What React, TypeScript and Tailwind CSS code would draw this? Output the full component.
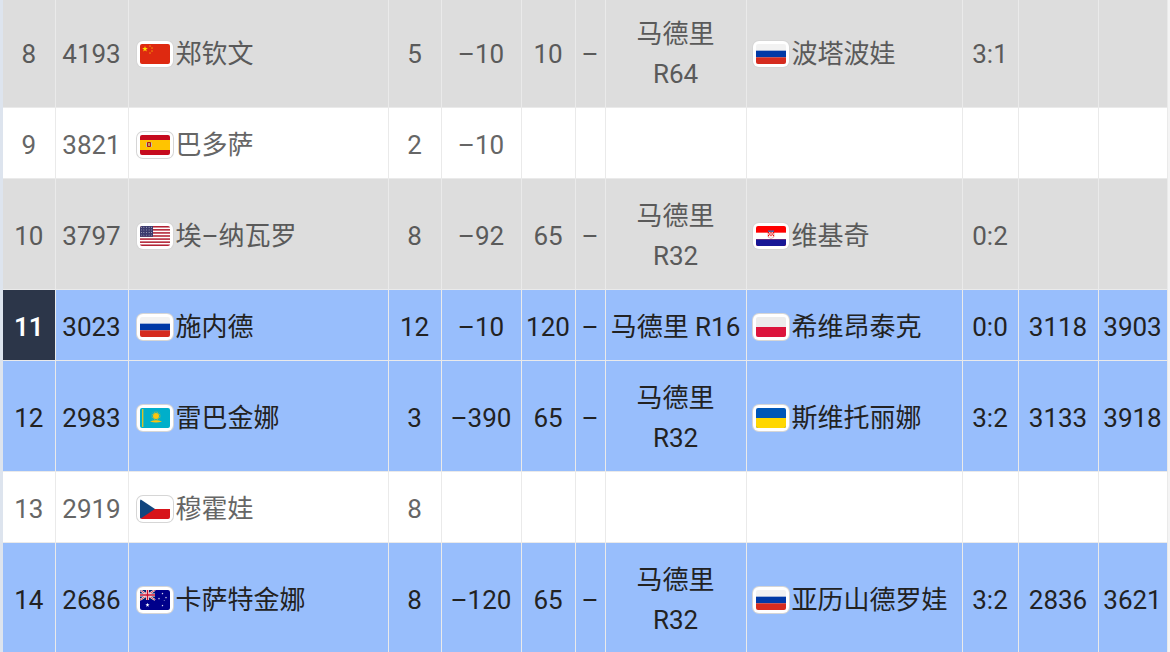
import React from "react";

type FlagCode = "cn" | "es" | "us" | "ru" | "hr" | "kz" | "pl" | "ua" | "cz" | "au";

function starPoints(cx: number, cy: number, r: number, rot = -90) {
  const pts: string[] = [];
  for (let i = 0; i < 10; i++) {
    const rad = i % 2 === 0 ? r : r * 0.4;
    const a = ((rot + i * 36) * Math.PI) / 180;
    pts.push(`${(cx + rad * Math.cos(a)).toFixed(2)},${(cy + rad * Math.sin(a)).toFixed(2)}`);
  }
  return pts.join(" ");
}

function UnionJack() {
  return (
    <g>
      <rect width="15" height="10" fill="#012169" />
      <path d="M0,0 L15,10 M15,0 L0,10" stroke="#fff" strokeWidth="2" />
      <path d="M0,0 L15,10 M15,0 L0,10" stroke="#c8102e" strokeWidth="0.8" />
      <path d="M7.5,0 V10 M0,5 H15" stroke="#fff" strokeWidth="3" />
      <path d="M7.5,0 V10 M0,5 H15" stroke="#c8102e" strokeWidth="1.6" />
    </g>
  );
}

function FlagArt({ code }: { code: FlagCode }) {
  switch (code) {
    case "cn":
      return (
        <>
          <rect width="30" height="20" fill="#de2910" />
          <polygon points={starPoints(5, 5, 3)} fill="#ffde00" />
          <polygon points={starPoints(10, 2, 1)} fill="#ffde00" />
          <polygon points={starPoints(12, 4, 1)} fill="#ffde00" />
          <polygon points={starPoints(12, 7, 1)} fill="#ffde00" />
          <polygon points={starPoints(10, 9, 1)} fill="#ffde00" />
        </>
      );
    case "es":
      return (
        <>
          <rect width="30" height="20" fill="#c60b1e" />
          <rect y="5" width="30" height="10" fill="#ffc400" />
          <rect x="7" y="7" width="4" height="5" rx="1" fill="#ad1519" />
          <rect x="8" y="8" width="2" height="3" fill="#c8a24a" />
          <rect x="6" y="7.5" width="1" height="4.5" fill="#bbb" />
          <rect x="11" y="7.5" width="1" height="4.5" fill="#bbb" />
        </>
      );
    case "us":
      return (
        <>
          <rect width="30" height="20" fill="#fff" />
          {Array.from({ length: 7 }).map((_, i) => (
            <rect key={i} y={i * (20 / 6.5)} width="30" height={20 / 13} fill="#b22234" />
          ))}
          <rect width="13" height="10.8" fill="#3c3b6e" />
          {Array.from({ length: 20 }).map((_, i) => (
            <circle key={i} cx={1.3 + (i % 5) * 2.6} cy={1.3 + Math.floor(i / 5) * 2.6} r="0.45" fill="#fff" />
          ))}
        </>
      );
    case "ru":
      return (
        <>
          <rect width="30" height="20" fill="#f2f2f2" />
          <rect y="6.67" width="30" height="6.67" fill="#0039a6" />
          <rect y="13.33" width="30" height="6.67" fill="#d52b1e" />
        </>
      );
    case "hr":
      return (
        <>
          <rect width="30" height="20" fill="#ff0000" />
          <rect y="6.67" width="30" height="6.67" fill="#fff" />
          <rect y="13.33" width="30" height="6.67" fill="#171796" />
          <rect x="12" y="4.5" width="6" height="1.5" fill="#3b6fb6" />
          <path d="M12,6 H18 V11 Q15,14 12,11 Z" fill="#fff" stroke="#c00" strokeWidth="0.3" />
          {Array.from({ length: 15 }).map((_, i) => {
            const cx = i % 5;
            const cy = Math.floor(i / 5);
            return (cx + cy) % 2 === 0 ? (
              <rect key={i} x={12 + cx * 1.2} y={6 + cy * 1.4} width="1.2" height="1.4" fill="#e00" />
            ) : null;
          })}
        </>
      );
    case "kz":
      return (
        <>
          <rect width="30" height="20" fill="#00afca" />
          <circle cx="16" cy="8" r="3" fill="#fec50c" />
          {Array.from({ length: 16 }).map((_, i) => {
            const a = (i * 22.5 * Math.PI) / 180;
            return (
              <line
                key={i}
                x1={16 + 3.4 * Math.cos(a)}
                y1={8 + 3.4 * Math.sin(a)}
                x2={16 + 4.6 * Math.cos(a)}
                y2={8 + 4.6 * Math.sin(a)}
                stroke="#fec50c"
                strokeWidth="0.6"
              />
            );
          })}
          <path d="M10,13.5 Q16,11 22,13.5 Q16,15.5 10,13.5 Z" fill="#fec50c" />
          <rect x="2" y="1" width="1.4" height="18" fill="#fec50c" opacity="0.85" />
        </>
      );
    case "pl":
      return (
        <>
          <rect width="30" height="20" fill="#ececec" />
          <rect y="10" width="30" height="10" fill="#dc143c" />
        </>
      );
    case "ua":
      return (
        <>
          <rect width="30" height="20" fill="#0057b7" />
          <rect y="10" width="30" height="10" fill="#ffd700" />
        </>
      );
    case "cz":
      return (
        <>
          <rect width="30" height="20" fill="#fff" />
          <rect y="10" width="30" height="10" fill="#d7141a" />
          <polygon points="0,0 15,10 0,20" fill="#11457e" />
        </>
      );
    case "au":
      return (
        <>
          <rect width="30" height="20" fill="#00008b" />
          <UnionJack />
          <polygon points={starPoints(7.5, 15, 2.2)} fill="#fff" />
          <polygon points={starPoints(22.5, 15.5, 1.1)} fill="#fff" />
          <polygon points={starPoints(19, 8.5, 1.1)} fill="#fff" />
          <polygon points={starPoints(22.5, 3.5, 1.1)} fill="#fff" />
          <polygon points={starPoints(26, 7.5, 1.1)} fill="#fff" />
          <polygon points={starPoints(24.2, 10.5, 0.6)} fill="#fff" />
        </>
      );
  }
}

function Flag({ code }: { code: FlagCode }) {
  return (
    <span className="inline-flex items-center justify-center w-[36px] h-[26px] shrink-0 rounded-[6px] bg-white shadow-[0_0_0_1px_#d6d6d6]">
      <svg width="30" height="20" viewBox="0 0 30 20" className="rounded-[2px]">
        <FlagArt code={code} />
      </svg>
    </span>
  );
}

type Row = {
  rank: string;
  elo: string;
  flag: FlagCode;
  name: string;
  a: string;
  b: string;
  c: string;
  d: string;
  round?: string;
  oppFlag?: FlagCode;
  opp?: string;
  score: string;
  e: string;
  f: string;
  tone: "grey" | "white" | "blue";
  me?: boolean;
};

const rows: Row[] = [
  { rank: "8", elo: "4193", flag: "cn", name: "郑钦文", a: "5", b: "–10", c: "10", d: "–", round: "R64", oppFlag: "ru", opp: "波塔波娃", score: "3:1", e: "", f: "", tone: "grey" },
  { rank: "9", elo: "3821", flag: "es", name: "巴多萨", a: "2", b: "–10", c: "", d: "", score: "", e: "", f: "", tone: "white" },
  { rank: "10", elo: "3797", flag: "us", name: "埃–纳瓦罗", a: "8", b: "–92", c: "65", d: "–", round: "R32", oppFlag: "hr", opp: "维基奇", score: "0:2", e: "", f: "", tone: "grey" },
  { rank: "11", elo: "3023", flag: "ru", name: "施内德", a: "12", b: "–10", c: "120", d: "–", round: "R16", oppFlag: "pl", opp: "希维昂泰克", score: "0:0", e: "3118", f: "3903", tone: "blue", me: true },
  { rank: "12", elo: "2983", flag: "kz", name: "雷巴金娜", a: "3", b: "–390", c: "65", d: "–", round: "R32", oppFlag: "ua", opp: "斯维托丽娜", score: "3:2", e: "3133", f: "3918", tone: "blue" },
  { rank: "13", elo: "2919", flag: "cz", name: "穆霍娃", a: "8", b: "", c: "", d: "", score: "", e: "", f: "", tone: "white" },
  { rank: "14", elo: "2686", flag: "au", name: "卡萨特金娜", a: "8", b: "–120", c: "65", d: "–", round: "R32", oppFlag: "ru", opp: "亚历山德罗娃", score: "3:2", e: "2836", f: "3621", tone: "blue" },
];

const toneClass = {
  grey: "bg-[#dddddd] text-[#5a5a5a]",
  white: "bg-white text-[#666666]",
  blue: "bg-[#98befc] text-[#222222]",
};

const cell = "border-r border-b border-[#eaeaea] pt-[17px] pb-[13px] text-center align-middle";

export default function App() {
  return (
    <div
      className="flex w-[1170px] h-[652px] overflow-hidden bg-[#f4f4f4] text-[26px] leading-[40px]"
      style={{ fontFamily: 'Roboto, "Noto Sans CJK SC", sans-serif' }}
    >
      <div className="w-[3px] shrink-0 bg-[#dde4ee]" />
      <table className="table-fixed border-collapse w-[1164px] -mt-[3px] self-start">
        <colgroup>
          <col className="w-[52px]" />
          <col className="w-[73px]" />
          <col className="w-[260px]" />
          <col className="w-[53px]" />
          <col className="w-[80px]" />
          <col className="w-[54px]" />
          <col className="w-[30px]" />
          <col className="w-[141px]" />
          <col className="w-[216px]" />
          <col className="w-[56px]" />
          <col className="w-[80px]" />
          <col className="w-[69px]" />
        </colgroup>
        <tbody>
          {rows.map((r) => (
            <tr key={r.rank} className={toneClass[r.tone]}>
              <td className={`${cell} ${r.me ? "bg-[#2c3649] text-white font-semibold" : ""}`}>{r.rank}</td>
              <td className={cell}>{r.elo}</td>
              <td className={`${cell} text-left pl-2`}>
                <div className="flex items-center gap-[3px] whitespace-nowrap">
                  <Flag code={r.flag} />
                  <span>{r.name}</span>
                </div>
              </td>
              <td className={cell}>{r.a}</td>
              <td className={cell}>{r.b}</td>
              <td className={cell}>{r.c}</td>
              <td className={cell}>{r.d}</td>
              <td className={`${cell} px-0 whitespace-nowrap`}>
                {r.round &&
                  (r.me ? (
                    <span>马德里 {r.round}</span>
                  ) : (
                    <>
                      马德里
                      <br />
                      {r.round}
                    </>
                  ))}
              </td>
              <td className={`${cell} text-left pl-[6px]`}>
                {r.oppFlag && (
                  <div className="flex items-center gap-[3px] whitespace-nowrap">
                    <Flag code={r.oppFlag} />
                    <span>{r.opp}</span>
                  </div>
                )}
              </td>
              <td className={cell}>{r.score}</td>
              <td className={cell}>{r.e}</td>
              <td className={cell}>{r.f}</td>
            </tr>
          ))}
        </tbody>
      </table>
    </div>
  );
}
